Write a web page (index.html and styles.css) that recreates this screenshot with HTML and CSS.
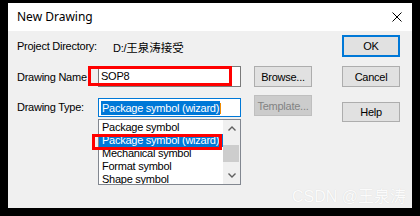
FILE: index.html
```html
<!DOCTYPE html>
<html>
<head>
<meta charset="utf-8">
<link rel="stylesheet" href="styles.css">
</head>
<body>
<div class="dialog">
  <div class="titlebar">
    <span class="title">New Drawing</span>
    <svg class="close" width="10" height="10" viewBox="0 0 10 10"><path d="M0.5 0.5 L9.5 9.5 M9.5 0.5 L0.5 9.5" stroke="#000" stroke-width="1" fill="none"/></svg>
  </div>
  <div class="content">
    <div class="row row-dir">
      <span class="label">Project Directory:</span>
      <span class="dir-value">D:/<span class="cjk">王泉涛接受</span></span>
      <button class="btn btn-default">OK</button>
    </div>
    <div class="row row-name">
      <span class="label">Drawing Name</span>
      <div class="field textbox">SOP8</div>
      <button class="btn btn-mid">Browse...</button>
      <button class="btn">Cancel</button>
    </div>
    <div class="row row-type">
      <span class="label label-type">Drawing Type:</span>
      <div class="field combo-wrap">
        <div class="combo"><span class="sel">Package symbol (wizard)</span><span class="caret"></span></div>
        <div class="dropdown">
          <div class="items">
            <div class="item">Package symbol</div>
            <div class="item item-active">Package symbol (wizard)</div>
            <div class="item">Mechanical symbol</div>
            <div class="item">Format symbol</div>
            <div class="item">Shape symbol</div>
          </div>
          <div class="scrollbar">
            <div class="sb-btn"><svg width="8" height="5" viewBox="0 0 8 5"><path d="M0.5 4.5 L4 1 L7.5 4.5" stroke="#606060" stroke-width="1.4" fill="none"/></svg></div>
            <div class="sb-track"><div class="sb-thumb"></div></div>
            <div class="sb-btn"><svg width="8" height="5" viewBox="0 0 8 5"><path d="M0.5 0.5 L4 4 L7.5 0.5" stroke="#606060" stroke-width="1.4" fill="none"/></svg></div>
          </div>
        </div>
      </div>
      <button class="btn btn-mid btn-template" disabled>Template...</button>
      <button class="btn btn-help">Help</button>
    </div>
  </div>
  <div class="mark mark-name"></div>
  <div class="mark mark-item"></div>
  <div class="watermark">CSDN @王泉涛</div>
</div>
</body>
</html>
```
FILE: styles.css
```css
html, body {
  margin: 0;
  padding: 0;
}
body {
  background: #000;
  width: 420px;
  height: 216px;
  overflow: hidden;
  padding: 3px 0 0 8px;
  box-sizing: border-box;
  font-family: "Liberation Sans", "Noto Sans CJK SC", sans-serif;
  font-size: 11px;
  letter-spacing: -0.25px;
  color: #000;
}
.dialog {
  position: relative;
  width: 404px;
  height: 205px;
  background: #f0f0f0;
  overflow: hidden;
}
.titlebar {
  height: 28px;
  background: #fff;
  display: flex;
  align-items: center;
  justify-content: space-between;
  padding: 0 10px 0 9px;
}
.title {
  font-family: "Noto Sans", sans-serif;
  font-size: 12px;
  letter-spacing: 0;
  margin-top: -1px;
}
.close {
  display: block;
  margin-top: -1px;
}
.content {
  padding: 4px 12px 0 9px;
}
.row {
  display: flex;
  align-items: center;
}
.row-dir {
  height: 22px;
}
.row-name {
  height: 21px;
  margin-top: 9px;
}
.row-type {
  height: 27px;
  margin-top: 8px;
  align-items: flex-start;
}
.label {
  width: 81px;
  flex: none;
  white-space: nowrap;
}
.label-type {
  margin-top: 3px;
  line-height: 19px;
}
.dir-value {
  flex: 1;
  padding-left: 15px;
  padding-top: 2px;
  white-space: nowrap;
}
.cjk {
  font-family: "Noto Sans CJK SC", sans-serif;
  font-size: 11.5px;
  letter-spacing: 0;
}
.field {
  width: 143px;
  margin-right: 13px;
  flex: none;
  box-sizing: border-box;
}
.btn {
  width: 58px;
  height: 21px;
  flex: none;
  box-sizing: border-box;
  padding: 0;
  margin: 0;
  background: #e1e1e1;
  border: 1px solid #adadad;
  font: inherit;
  color: #000;
  letter-spacing: -0.25px;
}
.btn-mid {
  margin-right: 30px;
}
.btn-default {
  height: 22px;
  border: 2px solid #0078d7;
}
.btn-template {
  background: #cccccc;
  border-color: #bfbfbf;
  color: #838383;
}
.btn-help {
  height: 20px;
  margin-top: 7px;
}
.textbox {
  height: 21px;
  background: #fff;
  border: 1px solid #7a7a7a;
  padding: 0 0 0 2px;
  line-height: 19px;
}
.combo-wrap {
  position: relative;
  margin-top: 3px;
  height: 19px;
}
.combo {
  height: 19px;
  box-sizing: border-box;
  background: #fff;
  border: 1px solid #0078d7;
  padding: 2px 0 0 2px;
  display: flex;
  align-items: flex-start;
}
.sel {
  background: #0078d7;
  color: #fff;
  line-height: 14px;
  height: 14px;
  padding: 0 1px 0 1px;
  white-space: nowrap;
}
.caret {
  width: 1px;
  height: 11px;
  margin-top: 2px;
  background: #f08a00;
}
.dropdown {
  position: absolute;
  left: 0;
  top: 21px;
  width: 143px;
  height: 66px;
  box-sizing: border-box;
  background: #fff;
  border: 1px solid #828790;
  display: flex;
  z-index: 2;
}
.items {
  flex: 1;
  padding-top: 1px;
  overflow: hidden;
}
.item {
  height: 13px;
  line-height: 13px;
  padding-left: 3px;
  white-space: nowrap;
}
.item-active {
  background: #0078d7;
  color: #fff;
}
.scrollbar {
  width: 17px;
  flex: none;
  background: #f0f0f0;
  display: flex;
  flex-direction: column;
}
.sb-btn {
  height: 17px;
  display: flex;
  align-items: center;
  justify-content: center;
}
.sb-btn svg {
  display: block;
}
.sb-track {
  flex: 1;
  padding-top: 8px;
}
.sb-thumb {
  height: 17px;
  margin: 0 1px 0 0;
  background: #cdcdcd;
}
.mark {
  position: absolute;
  border: 3px solid #ff0000;
  box-sizing: border-box;
  z-index: 5;
}
.mark-name {
  left: 80px;
  top: 63px;
  width: 144px;
  height: 20px;
}
.mark-item {
  left: 84px;
  top: 131px;
  width: 130px;
  height: 16px;
}
.watermark {
  position: absolute;
  right: 6px;
  bottom: 1px;
  font-size: 16px;
  letter-spacing: 0;
  color: #fbfbfb;
  text-shadow: 0 0 1px rgba(0, 0, 0, 0.12);
  white-space: nowrap;
  z-index: 6;
}
```
